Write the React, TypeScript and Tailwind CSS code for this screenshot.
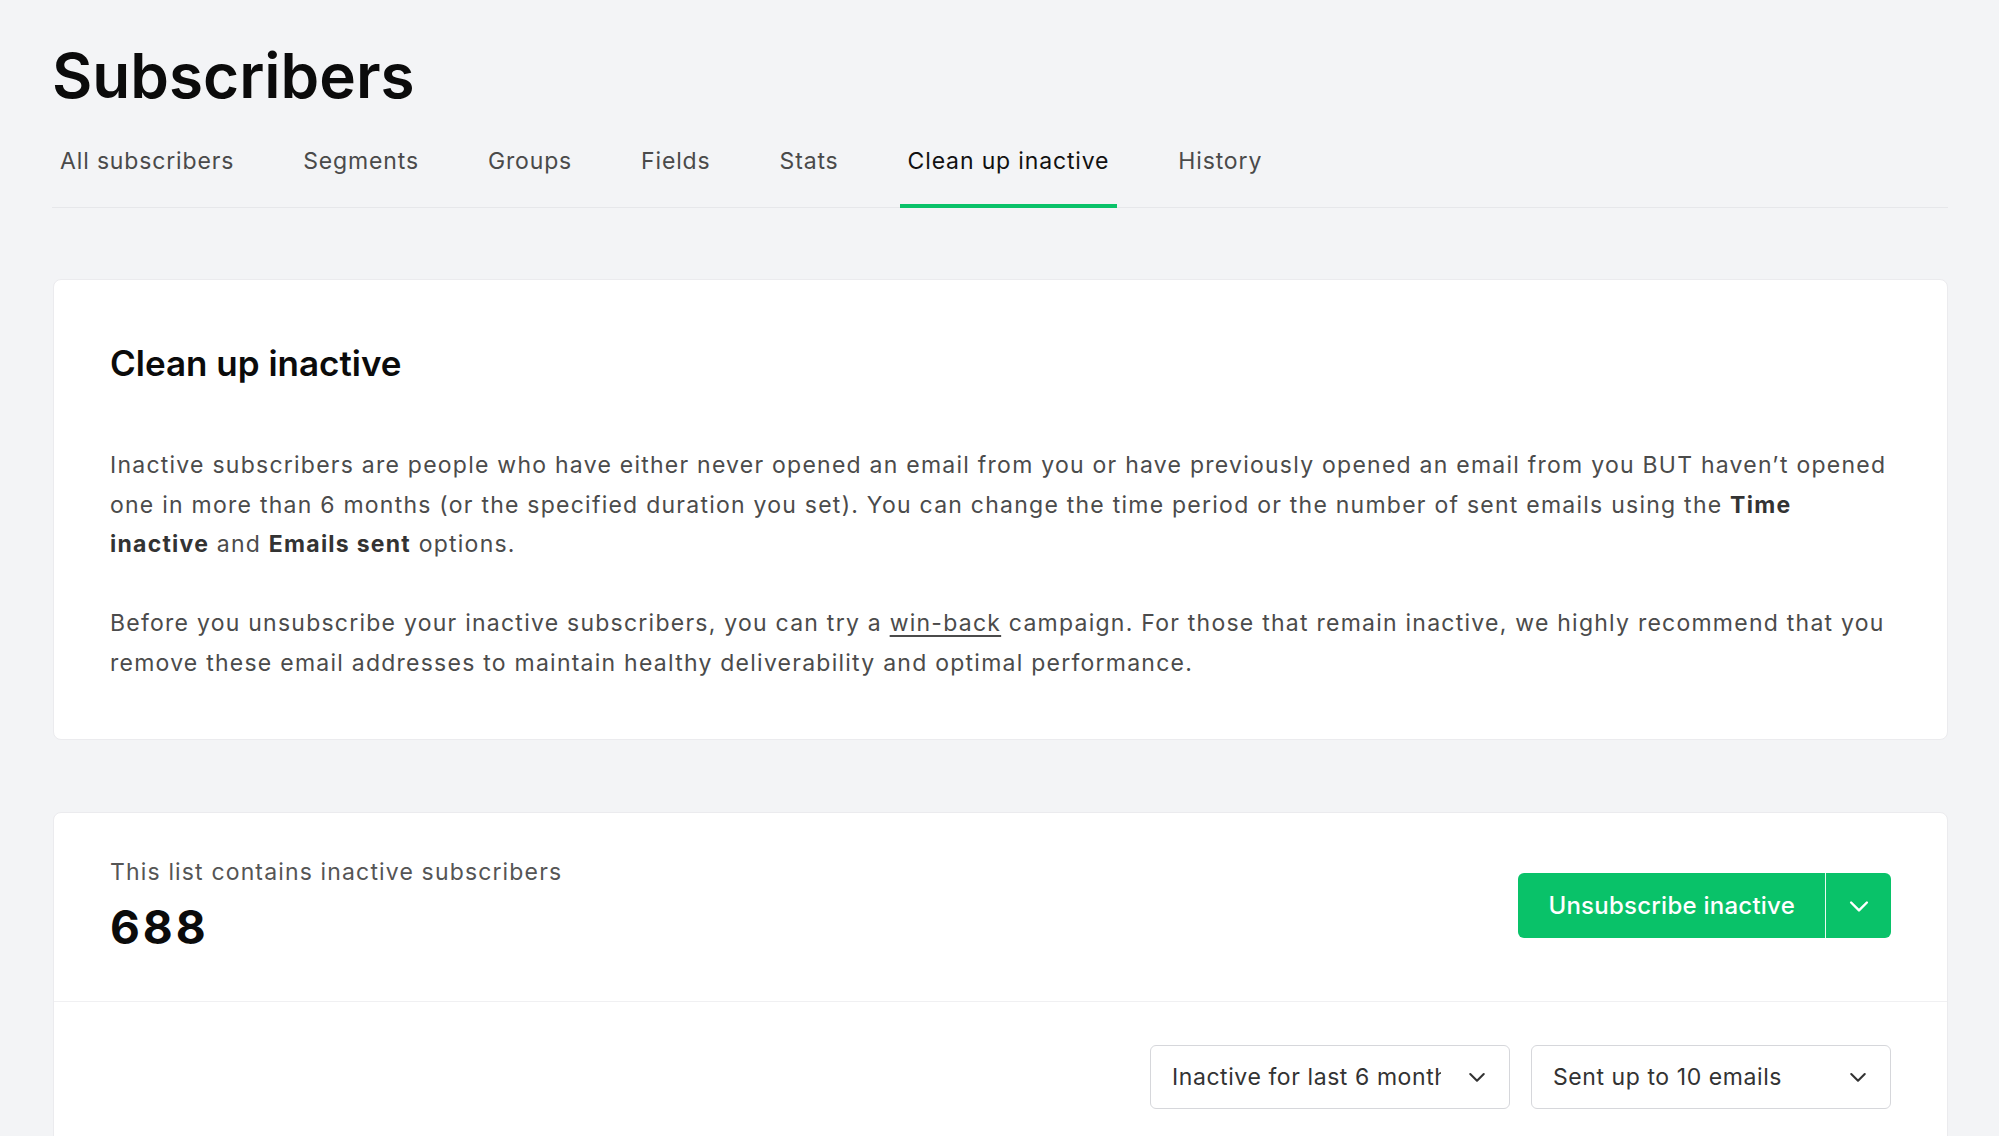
import React from "react";

function Chevron({ className = "", size = 24 }: { className?: string; size?: number }) {
  return (
    <svg
      width={size}
      height={size}
      viewBox="0 0 16 16"
      fill="none"
      stroke="currentColor"
      strokeWidth="1.4"
      strokeLinecap="round"
      strokeLinejoin="round"
      className={className}
    >
      <path d="M3.5 6l4.5 4.5 4.5-4.5" />
    </svg>
  );
}

export default function App() {
  const tabs = [
    "All subscribers",
    "Segments",
    "Groups",
    "Fields",
    "Stats",
    "Clean up inactive",
    "History",
  ];
  const active = "Clean up inactive";
  return (
    <div className="h-[1136px] w-full overflow-hidden bg-[#f3f4f6] pl-[52px] pr-[51px] pt-[44px] font-[Inter,sans-serif] text-[#111]">
      <h1 className="text-[62px] font-semibold leading-[64px] text-[#0b0b0b]">Subscribers</h1>

      <div className="mt-[37px] flex gap-[53px] border-b border-[#e6e7ea]">
        {tabs.map((t) => (
          <div
            key={t}
            className={
              t === active
                ? "-mb-px border-b-4 border-[#09c269] px-2 pb-[27px] text-[23px] leading-[32px] tracking-[0.037em] text-[#111]"
                : "-mb-px border-b-4 border-transparent px-2 pb-[27px] text-[23px] leading-[32px] tracking-[0.037em] text-[#4a4a4a]"
            }
          >
            {t}
          </div>
        ))}
      </div>

      <div className="ml-px mt-[71px] rounded-lg border border-[#ebebee] bg-white px-14 pb-14 pt-[59px]">
        <h2 className="text-[35px] font-semibold leading-[48px] text-[#0b0b0b]">Clean up inactive</h2>
        <p className="mt-[59px] max-w-[1781px] text-[23px] leading-[39.5px] tracking-[0.054em] text-[#4b4b4b]">
          Inactive subscribers are people who have either never opened an email from you or have previously opened an
          email from you BUT haven’t opened one in more than 6 months (or the specified duration you set). You can
          change the time period or the number of sent emails using the{" "}
          <span className="font-bold text-[#333]">Time inactive</span> and{" "}
          <span className="font-bold text-[#333]">Emails sent</span> options.
        </p>
        <p className="mt-[39.5px] max-w-[1781px] text-[23px] leading-[39.5px] tracking-[0.054em] text-[#4b4b4b]">
          Before you unsubscribe your inactive subscribers, you can try a{" "}
          <span className="underline underline-offset-[4px]">win-back</span> campaign. For those that remain inactive,
          we highly recommend that you remove these email addresses to maintain healthy deliverability and optimal
          performance.
        </p>
      </div>

      <div className="ml-px mt-[72px] rounded-lg border border-[#ebebee] bg-white">
        <div className="flex items-center justify-between border-b border-[#f0f0f2] px-14 pb-[46px] pt-[43px]">
          <div className="pb-[5px]">
            <div className="text-[23px] leading-[32px] tracking-[0.05em] text-[#555]">
              This list contains inactive subscribers
            </div>
            <div className="mt-[16px] text-[46px] font-bold leading-[46px] tracking-[3px] text-[#0b0b0b]">688</div>
          </div>
          <div className="flex h-[65px] overflow-hidden rounded-md bg-[#09c269] text-white">
            <div className="flex items-center px-[30px] text-[24px] font-medium tracking-[0.01em]">
              Unsubscribe inactive
            </div>
            <div className="flex w-[66px] items-center justify-center border-l border-white/90">
              <Chevron size={28} />
            </div>
          </div>
        </div>
        <div className="flex justify-end gap-[21px] px-14 pt-[43px] pb-[43px]">
          <div className="flex h-[64px] w-[360px] items-center rounded-md border border-[#d6d7db] bg-white pl-[21px] pr-[20px]">
            <span className="w-[269px] overflow-hidden whitespace-nowrap text-[23px] tracking-[0.025em] text-[#333]">
              Inactive for last 6 months
            </span>
            <Chevron className="ml-auto text-[#333]" />
          </div>
          <div className="flex h-[64px] w-[360px] items-center rounded-md border border-[#d6d7db] bg-white pl-[21px] pr-[20px]">
            <span className="overflow-hidden whitespace-nowrap text-[23px] tracking-[0.025em] text-[#333]">
              Sent up to 10 emails
            </span>
            <Chevron className="ml-auto text-[#333]" />
          </div>
        </div>
      </div>
    </div>
  );
}
